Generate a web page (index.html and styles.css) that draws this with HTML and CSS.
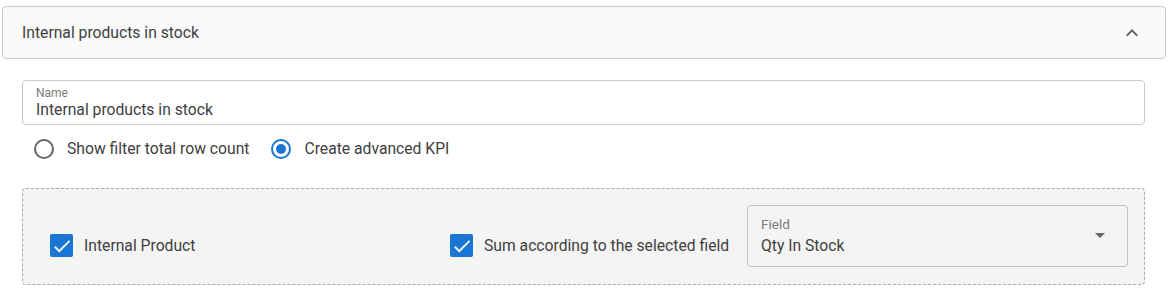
FILE: index.html
```html
<!DOCTYPE html>
<html lang="en">
<head>
    <meta charset="UTF-8">
    <meta name="viewport" content="width=device-width, initial-scale=1.0">
    <title>KPI settings</title>
    <link rel="stylesheet" href="styles.css">
</head>
<body>
    <!-- Collapsible panel header -->
    <div class="panel-header">
        <span class="panel-title">Internal products in stock</span>
        <svg class="chevron" width="24" height="24" viewBox="0 0 24 24">
            <path d="M12 8l-6 6 1.41 1.41L12 10.83l4.59 4.58L18 14z" fill="#666"/>
        </svg>
    </div>

    <div class="panel-body">
        <!-- Name field -->
        <div class="text-field">
            <span class="field-label">Name</span>
            <span class="field-value">Internal products in stock</span>
        </div>

        <!-- KPI type -->
        <div class="radio-row">
            <label class="radio">
                <span class="radio-circle"></span>
                Show filter total row count
            </label>
            <label class="radio">
                <span class="radio-circle checked"></span>
                Create advanced KPI
            </label>
        </div>

        <!-- Advanced KPI box -->
        <div class="kpi-box">
            <label class="check">
                <span class="check-box">
                    <svg width="22" height="22" viewBox="0 0 24 24">
                        <path d="M9 16.2L4.8 12l-1.4 1.4L9 19 21 7l-1.4-1.4L9 16.2z" fill="#fff"/>
                    </svg>
                </span>
                Internal Product
            </label>
            <label class="check">
                <span class="check-box">
                    <svg width="22" height="22" viewBox="0 0 24 24">
                        <path d="M9 16.2L4.8 12l-1.4 1.4L9 19 21 7l-1.4-1.4L9 16.2z" fill="#fff"/>
                    </svg>
                </span>
                Sum according to the selected field
            </label>
            <div class="select-field">
                <div class="select-text">
                    <span class="field-label">Field</span>
                    <span class="field-value">Qty In Stock</span>
                </div>
                <span class="select-arrow"></span>
            </div>
        </div>
    </div>
</body>
</html>
```

FILE: styles.css
```css
/* Basic reset */
* {
    margin: 0;
    padding: 0;
    box-sizing: border-box;
}

body {
    font-family: Roboto, 'Liberation Sans', sans-serif;
    background-color: #fff;
    color: #404040;
    font-size: 15.7px;
    width: 1170px;
    height: 296px;
    overflow: hidden;
}

/* Panel header */
.panel-header {
    margin: 6px 4px 0 2px;
    height: 53px;
    border: 1px solid #c9c9c9;
    border-radius: 4px;
    background-color: #fafafa;
    padding: 0 21px 0 19px;
    display: flex;
    align-items: center;
    justify-content: space-between;
}

.panel-title {
    font-size: 15.7px;
}

/* Panel body */
.panel-body {
    padding: 21px 25px 0 22px;
}

.text-field {
    height: 45px;
    border: 1px solid #c9c9c9;
    border-radius: 4px;
    padding: 6px 13px 0;
    display: flex;
    flex-direction: column;
}

.field-label {
    font-size: 12px;
    line-height: 13px;
    color: #7a7a7a;
}

.field-value {
    font-size: 15.7px;
    line-height: 20px;
}

/* Radios */
.radio-row {
    display: flex;
    align-items: center;
    gap: 22px;
    height: 47px;
    padding: 0 0 0 12px;
}

.radio {
    display: flex;
    align-items: center;
    gap: 13px;
}

.radio-circle {
    width: 20px;
    height: 20px;
    border: 2px solid #666;
    border-radius: 50%;
    display: flex;
    align-items: center;
    justify-content: center;
}

.radio-circle.checked {
    border-color: #1976d2;
}

.radio-circle.checked::after {
    content: "";
    width: 10px;
    height: 10px;
    border-radius: 50%;
    background-color: #1976d2;
}

/* Advanced KPI box */
.kpi-box {
    margin-top: 16px;
    height: 97px;
    border: 1px dashed #aaa;
    border-radius: 4px;
    background-color: #f4f4f4;
    padding: 0 16px 0 27px;
    display: grid;
    grid-template-columns: 400px 297px 1fr;
    align-items: center;
}

.check {
    display: flex;
    align-items: center;
    gap: 11px;
    margin-top: 18px;
}

.check-box {
    width: 23px;
    height: 23px;
    border-radius: 2px;
    background-color: #1976d2;
    display: flex;
    align-items: center;
    justify-content: center;
}

.select-field {
    height: 62px;
    margin-top: -1px;
    border: 1px solid #c2c2c2;
    border-radius: 4px;
    padding: 0 22px 0 13px;
    display: flex;
    align-items: center;
    justify-content: space-between;
}

.select-text {
    display: flex;
    flex-direction: column;
    gap: 4px;
    margin-top: -1px;
}

.select-text .field-label {
    font-size: 13.5px;
    line-height: 16px;
    color: #7a7a7a;
}

.select-arrow {
    width: 0;
    height: 0;
    border-left: 5px solid transparent;
    border-right: 5px solid transparent;
    border-top: 5px solid #666;
    margin-bottom: 2px;
}
```
